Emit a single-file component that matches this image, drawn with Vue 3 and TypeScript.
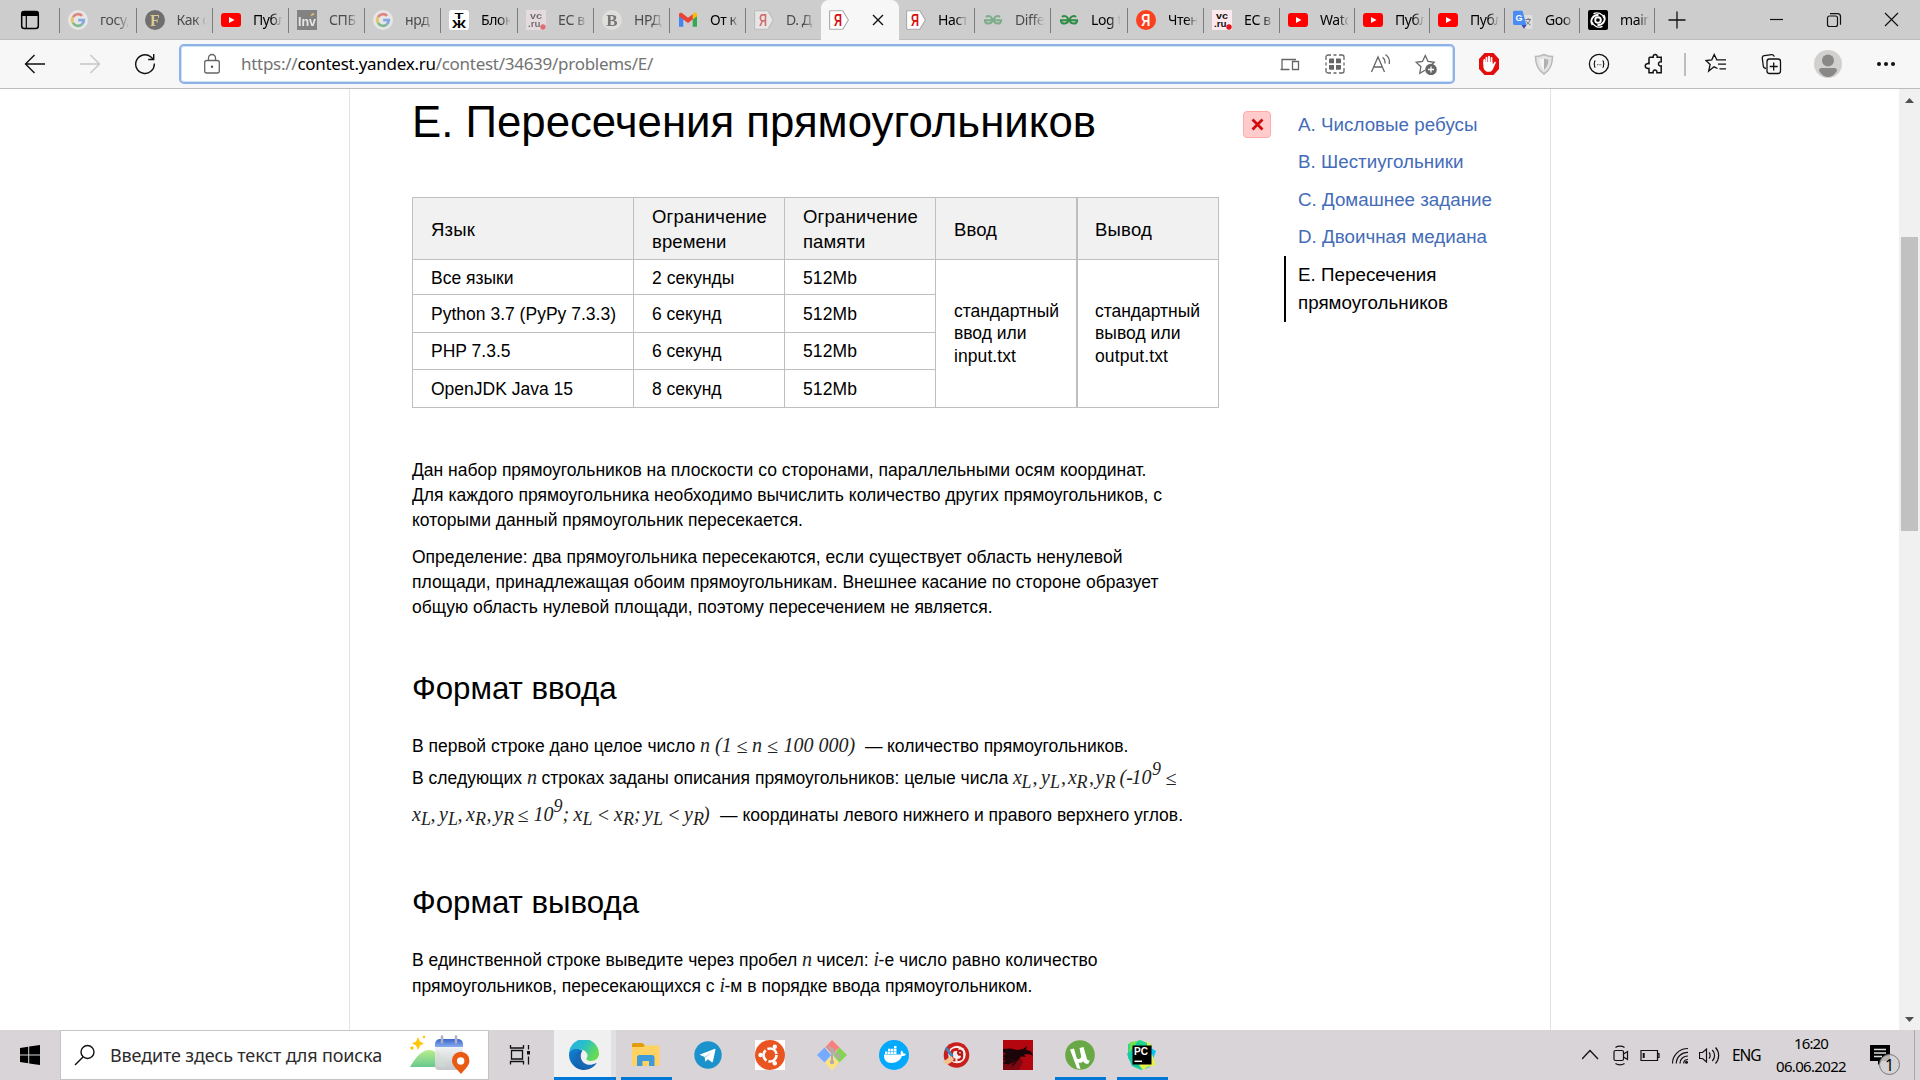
<script setup lang="ts">
import type { Directive } from 'vue'

interface Tab {
  icon: string
  title: string
  w: number
  dim?: boolean
  active?: boolean
}

interface Segment {
  t: string
  w: number
  kind: 'text' | 'math' | 'sub' | 'sup' | 'rel'
}

// Spreads the letters of an element over a given width.
const vFit: Directive<HTMLElement, number> = {
  mounted(el, { value }) {
    if (!value) return
    const range = document.createRange()
    range.selectNodeContents(el)
    const natural = range.getBoundingClientRect().width
    const count = (el.textContent ?? '').length
    el.style.letterSpacing = `${((value - natural) / count).toFixed(4)}px`
  },
}

const google =
  '<circle cx="10" cy="10" r="10" fill="#fff"/><g fill="none" stroke-width="2.7"><path d="M14.1 5.9A5.8 5.8 0 0 0 5 7.1" stroke="#ea4335"/><path d="M5 7.1A5.8 5.8 0 0 0 5 12.9" stroke="#fbbc05"/><path d="M5 12.9A5.8 5.8 0 0 0 13.8 14.4" stroke="#34a853"/><path d="M13.8 14.4A5.8 5.8 0 0 0 15.8 10.2H10.2" stroke="#4285f4"/></g>'
const youtube =
  '<rect x="0" y="3" width="20" height="14" rx="3" fill="#f00"/><path d="M8 7l5.5 3L8 13z" fill="#fff"/>'
const vc =
  '<rect width="20" height="20" fill="#fde8ee"/><g font-family="Liberation Sans" font-weight="700" font-size="9.5" fill="#111"><text x="4" y="8.500" textLength="12" lengthAdjust="spacingAndGlyphs">vc</text><text x="2" y="17" textLength="12.5" lengthAdjust="spacingAndGlyphs">.ru</text></g><circle cx="17" cy="17" r="2.7" fill="#e8131d"/>'
const contest =
  '<path d="M1.5.7h12.3L19.4 10l-5.6 9.3H1.5A1 1 0 0 1 .6 18V2a1 1 0 0 1 .9-1.3z" fill="#fff" stroke="#aaa" stroke-width="1.1"/><text x="9" y="15.7" text-anchor="middle" font-family="Liberation Sans" font-size="16" font-weight="700" fill="#d8100c" textLength="8" lengthAdjust="spacingAndGlyphs">Я</text>'
const gfg =
  '<g fill="none" stroke="#2f8d46" stroke-width="2"><path d="M3 7C5 5.300 9 6 9.200 10c0 4.300-7 5-7.400.3M17 7c-2-1.700-6-1-6.200 3 0 4.300 7 5 7.400.3M1 10.200h18"/></g>'

const tabIcons: Record<string, string> = {
  google,
  youtube,
  vc,
  contest,
  gfg,
  forbes:
    '<circle cx="10" cy="10" r="10" fill="#141414"/><text x="10" y="15.500" text-anchor="middle" font-family="Liberation Serif" font-weight="700" font-size="16" fill="#e6c84f">F</text>',
  inv:
    '<rect width="20" height="20" fill="#3a3a3a"/><text x="1" y="15.500" font-family="Liberation Sans" font-weight="700" font-size="12" fill="#fff" textLength="18" lengthAdjust="spacingAndGlyphs">Inv</text><path d="M14 5.500l3-2" stroke="#f7a414" stroke-width="2"/>',
  tj:
    '<rect y="0" width="20" height="20" rx="3" fill="#fff"/><g font-family="Liberation Sans" font-weight="700" fill="#000" text-anchor="middle"><text x="10" y="9" font-size="9.500" textLength="9" lengthAdjust="spacingAndGlyphs">Т</text><text x="10" y="18" font-size="11" textLength="14" lengthAdjust="spacingAndGlyphs">Ж</text></g>',
  b:
    '<circle cx="10" cy="10" r="10" fill="#f3efea"/><text x="10" y="15.800" text-anchor="middle" font-family="Liberation Serif" font-weight="700" font-size="17" fill="#222">B</text>',
  gmail:
    '<path d="M1 4.800v12h4.300V8.500z" fill="#4285f4"/><path d="M14.700 16.800H19v-12l-4.300 3.700z" fill="#34a853"/><path d="M14.700 4v5.500L19 6.200V4.500c0-2-2-2.700-3.300-1.500z" fill="#fbbc04"/><path d="M1 4.500v1.700l4.300 3.300L10 13l4.700-3.500V4.200L10 7.700 4.300 3.200C3 2.200 1 2.700 1 4.500z" fill="#ea4335"/>',
  yandex:
    '<circle cx="10" cy="10" r="10" fill="#fc3f1d"/><text x="9.700" y="15.800" text-anchor="middle" font-family="Liberation Sans" font-weight="700" font-size="16" fill="#fff" textLength="9" lengthAdjust="spacingAndGlyphs">Я</text>',
  translate:
    '<path d="M8 5h10a1.500 1.500 0 0 1 1.500 1.500v11A1.500 1.500 0 0 1 18 19h-5z" fill="#dedede"/><path d="M1.500.7h8l4 14.300h-12A1.500 1.500 0 0 1 0 13.500v-11A1.500 1.500 0 0 1 1.500.7z" fill="#4a8cf5"/><path d="M8.500 15h5L11 18.800z" fill="#3949ab"/><text x="6" y="11" text-anchor="middle" font-family="Liberation Sans" font-weight="700" font-size="9" fill="#fff">G</text><path d="M12.500 9.500h5.500M15.200 8v1.500M17 9.500c-.5 2.500-2 4-3.500 5.200M13.500 11.500c1 1.500 2.500 2.700 4 3.500" stroke="#777" fill="none"/>',
  spiral:
    '<rect width="20" height="20" rx="2" fill="#000"/><g fill="none" stroke="#fff" stroke-width="1.900"><circle cx="10" cy="10" r="2.800"/><path d="M15.500 5C18.500 10 15 15.500 9.500 15M4.500 15C1.500 10 5 4.500 10.500 5"/><path d="M14.500 16.300c-4 2-9 .2-10.500-4.300M5.500 3.700c4-2 9-.2 10.500 4.300" stroke-width="1.300"/></g>',
}

const tabs: Tab[] = [
  { icon: 'google', title: 'госу,', w: 76.5, dim: true },
  { icon: 'forbes', title: 'Как с', w: 76.5, dim: true },
  { icon: 'youtube', title: 'Публ', w: 76 },
  { icon: 'inv', title: 'СПБ', w: 76, dim: true },
  { icon: 'google', title: 'нрд', w: 76, dim: true },
  { icon: 'tj', title: 'Блок', w: 77 },
  { icon: 'vc', title: 'ЕС в', w: 76, dim: true },
  { icon: 'b', title: 'НРД', w: 76, dim: true },
  { icon: 'gmail', title: 'От к', w: 76 },
  { icon: 'contest', title: 'D. Д', w: 76, dim: true },
  { icon: 'contest', title: '', w: 78, active: true },
  { icon: 'contest', title: 'Наст', w: 75 },
  { icon: 'gfg', title: 'Diffe', w: 76, dim: true },
  { icon: 'gfg', title: 'Log t', w: 77 },
  { icon: 'yandex', title: 'Чтен', w: 76 },
  { icon: 'vc', title: 'ЕС в', w: 76 },
  { icon: 'youtube', title: 'Watc', w: 75 },
  { icon: 'youtube', title: 'Публ', w: 75 },
  { icon: 'youtube', title: 'Публ', w: 75 },
  { icon: 'translate', title: 'Goo', w: 75 },
  { icon: 'spiral', title: 'main', w: 75 },
]

const addressIcons: string[] = [
  '<path d="M3 17V6.500h14M1.500 16.500h9M13.500 8.500h6v8h-6z"/>',
  '<path d="M2 7V4a2 2 0 0 1 2-2h3M9.500 2h3M15 2h3a2 2 0 0 1 2 2v3M20 9.500v3M20 15v3a2 2 0 0 1-2 2h-3M12.500 20h-3M7 20H4a2 2 0 0 1-2-2v-3M2 12.500v-3"/><path d="M6 5.500h4v4.700H5V6.500a1 1 0 0 1 1-1zM12 5.500h4a1 1 0 0 1 1 1v3.700h-5zM5 12h5v4.700H6a1 1 0 0 1-1-1zM12 12h5v3.700a1 1 0 0 1-1 1h-4z" fill="#666" stroke="none"/>',
  '<path d="M1.500 19L8 4l6.500 15M4 14h8M12.500 4.500c2 1.200 2.700 3.300 2.500 6M15.500 1.500c3.300 2.200 4.500 5 3.800 9.500"/>',
  '<path d="M10 17.200l-5.200 3 1.100-6.400L1.200 9.300l6.300-.8L10.300 2.500l2.700 6 6.200.8-2.500 2.500"/><circle cx="16" cy="16.500" r="5.800" fill="#666" stroke="none"/><path d="M16 13.500v6M13 16.500h6" stroke="#fff"/>',
]

const extensionIcons: string[] = [
  '<path d="M6.500 0h9L21 6v10l-5.500 6h-9L1 16V6z" fill="#e40d0d" stroke="none"/><path d="M6.300 11V7M8.500 10V4.800M11 10V3.800M13.500 10V5" stroke="#fff" stroke-width="1.900" stroke-linecap="round"/><path d="M5.400 9h9l.4 2.500 1.500-2.300c.8-.8 1.800-.1 1.400.8l-2.800 6.300c-1 2-2.200 2.500-4 2.500-3.500 0-5.500-2-5.500-5.500z" fill="#fff" stroke="none"/>',
  '<path d="M11 1.500c3 1.700 5.500 2 8.500 2 0 8-2 13.500-8.500 17.500C4.500 17 2.500 11.500 2.500 3.500c3 0 5.500-.3 8.500-2z" fill="#e4e4e4" stroke="#b9b9b9" stroke-width="1.500"/><path d="M11 5.500c-1.700.8-3 1-4.500 1 .2 4.500 1.500 7.800 4.500 10.500z" fill="#f4f4f4" stroke="none"/><path d="M11 5.500c1.700.8 3 1 4.500 1-.2 4.500-1.500 7.800-4.500 10.500z" fill="#b0b0b0" stroke="none"/>',
  '<circle cx="11" cy="11" r="9.600"/><path d="M7.500 7.700c-1.300 0-.9 1.500-1 2.300 0 .6-.4 1-.9 1 .5 0 .9.400.9 1 .1.800-.3 2.300 1 2.300M14.500 7.700c1.300 0 .9 1.500 1 2.300 0 .6.400 1 .9 1-.5 0-.9.400-.9 1-.1.800.3 2.300-1 2.300" stroke-width="1.100"/><path d="M8.900 11.800h.8M10.700 11.800h.8M12.500 11.800h.8" stroke-width="1.100"/>',
  '<path d="M7 4.300h3.200c-.8-3.600 4.800-3.600 4 0h4v4.500c-3.600-.8-3.600 5 0 4.200v6.700h-4.300c.8-3.600-4.600-3.600-3.800 0H6v-4.300c-5 .9-5-5.600 0-4.700V5.300a1 1 0 0 1 1-1z" stroke-width="1.500"/>',
]

const sidebarIcons: string[] = [
  '<path d="M12.500 15.500L9 13.800l-5.300 4.300 1.400-6.600L1 7.500l5.800-.7L9.200 1.500l2.600 5.300h9.200M13 11.200h8M14.500 15.800H21"/>',
  '<path d="M6 15.500c-2-.2-2.500-1-2.700-2.500l-1-7.500C2 3.500 3 2.800 4.500 2.600l7-1c1.500-.2 2.400.4 2.800 2"/><rect x="7" y="6" width="13.500" height="14.500" rx="2.500"/><path d="M13.700 9.500v8M9.700 13.500h8"/>',
]

const problems = [
  { name: 'A. Числовые ребусы', w: 179.5, h: 37 },
  { name: 'B. Шестиугольники', w: 165.5, h: 38 },
  { name: 'C. Домашнее задание', w: 194, h: 37 },
  { name: 'D. Двоичная медиана', w: 189, h: 38 },
]

const limits = [
  { lang: 'Все языки', lw: 82.5, time: '2 секунды', tw: 82.5, h: 35 },
  { lang: 'Python 3.7 (PyPy 7.3.3)', lw: 185, time: '6 секунд', tw: 69.5, h: 38 },
  { lang: 'PHP 7.3.5', lw: 79.5, time: '6 секунд', tw: 69.5, h: 37 },
  { lang: 'OpenJDK Java 15', lw: 142, time: '8 секунд', tw: 69.5, h: 38 },
]

const statement = [
  [
    { t: 'Дан набор прямоугольников на плоскости со сторонами, параллельными осям координат.', w: 734.5 },
    { t: 'Для каждого прямоугольника необходимо вычислить количество других прямоугольников, с', w: 750 },
    { t: 'которыми данный прямоугольник пересекается.', w: 391 },
  ],
  [
    { t: 'Определение: два прямоугольника пересекаются, если существует область ненулевой', w: 710.5 },
    { t: 'площади, принадлежащая обоим прямоугольникам. Внешнее касание по стороне образует', w: 746.5 },
    { t: 'общую область нулевой площади, поэтому пересечением не является.', w: 580.5 },
  ],
]

const seg = (kind: Segment['kind'], t: string, w: number): Segment => ({ kind, t, w })

const inputRows: Segment[][] = [
  [
    seg('text', 'В первой строке дано целое число ', 288), seg('math', 'n', 15), seg('math', '(1', 21.5),
    seg('rel', '≤', 15.5), seg('math', 'n', 15), seg('rel', '≤', 16.5), seg('math', '100 000)', 81.5),
    seg('text', '—', 22), seg('text', 'количество прямоугольников.', 241.5),
  ],
  [
    seg('text', 'В следующих ', 115), seg('math', 'n', 14.5), seg('text', 'строках заданы описания прямоугольников: целые числа ', 471.5),
    seg('math', 'x', 8.5), seg('sub', 'L', 11), seg('math', ',', 8.5), seg('math', 'y', 9), seg('sub', 'L', 11), seg('math', ',', 7),
    seg('math', 'x', 8.5), seg('sub', 'R', 12.5), seg('math', ',', 6.5), seg('math', 'y', 9), seg('sub', 'R', 15),
    seg('math', '(-', 12), seg('math', '10', 20.5), seg('sup', '9', 13.5), seg('rel', '≤', 12),
  ],
  [
    seg('math', 'x', 9), seg('sub', 'L', 9.5), seg('math', ',', 8.5), seg('math', 'y', 9), seg('sub', 'L', 9.5), seg('math', ',', 8.5),
    seg('math', 'x', 9), seg('sub', 'R', 11.5), seg('math', ',', 7.5), seg('math', 'y', 9), seg('sub', 'R', 14.5), seg('rel', '≤', 16),
    seg('math', '10', 20), seg('sup', '9', 9), seg('math', ';', 11), seg('math', 'x', 9), seg('sub', 'L', 14), seg('rel', '<', 17.5),
    seg('math', 'x', 9), seg('sub', 'R', 11), seg('math', ';', 10), seg('math', 'y', 9), seg('sub', 'L', 14), seg('rel', '<', 17),
    seg('math', 'y', 9), seg('sub', 'R', 10), seg('math', ')', 17), seg('text', '—', 22.5), seg('text', 'координаты левого нижнего и правого верхнего углов.', 440.5),
  ],
]

const outputRows: Segment[][] = [
  [
    seg('text', 'В единственной строке выведите через пробел ', 390), seg('math', 'n', 14.5), seg('text', 'чисел: ', 57),
    seg('math', 'i', 5), seg('text', '-е число равно количество', 219),
  ],
  [
    seg('text', 'прямоугольников, пересекающихся с ', 307.5), seg('math', 'i', 5), seg('text', '-м в порядке ввода прямоугольником.', 308),
  ],
]

const taskbar: { name: string; svg: string; state?: string }[] = [
  {
    name: 'edge',
    state: 'current',
    svg: '<defs><linearGradient id="eg" x1="0" y1="0" x2="1" y2=".5"><stop offset="0" stop-color="#2cabe2"/><stop offset=".5" stop-color="#28c0cb"/><stop offset="1" stop-color="#66dc50"/></linearGradient><linearGradient id="eb" x1="0" y1="0" x2="1" y2="1"><stop offset="0" stop-color="#1383d3"/><stop offset="1" stop-color="#0c4b98"/></linearGradient></defs><path d="M0 15A15 15 0 0 1 30 13c.4 5-3.600 8-8.300 8-3.200 0-4.700-1.300-4.200-2.400 1.400-1.600 1.400-4 0-5.900C14 8 5 8.500 0 15z" fill="url(#eg)"/><path d="M0 15c0-6.500 9.500-7.500 13.500-4.500C10 11 8.500 16 10 20c2 6 10 7.800 17.500 3C22 31.500 11 31.500 5.500 26.500 2 23.500 0 19.500 0 15z" fill="url(#eb)"/><path d="M13.500 10.500C7 10.500 5 18 9 24c3.500 5.500 10 6 15.500 2.500l3-3.500C20 27 12.500 24 11.800 17c-.3-3 .7-5 1.700-6.500z" fill="#1768b5"/>',
  },
  {
    name: 'explorer',
    state: 'open',
    svg: '<path d="M1 4.500A1.500 1.500 0 0 1 2.500 3h9L14 5.500V10H1z" fill="#e19d07"/><path d="M1 7h11l2-1.500h13A1.500 1.500 0 0 1 28.500 7v17.500A1.500 1.500 0 0 1 27 26H2.500A1.500 1.500 0 0 1 1 24.500z" fill="#ffd262"/><path d="M6 26v-8.500A2.500 2.500 0 0 1 8.500 15h12.500a2.500 2.500 0 0 1 2.500 2.500V26h-5.500v-5h-6.500v5z" fill="#3d9bdc"/>',
  },
  {
    name: 'telegram',
    svg: '<circle cx="15" cy="15" r="13.700" fill="#1c92cc"/><path d="M6.500 14.800l14.800-5.900c.8-.3 1.300.2 1.100 1L20 21.300c-.2.900-.7 1.100-1.400.7l-3.700-2.800-1.900 1.900c-.5.5-.9.3-.9-.3l-.4-3.700z" fill="#fff"/><path d="M11.500 17l7.500-5.500-6 6.300z" fill="#b8d9ea"/>',
  },
  {
    name: 'ubuntu',
    svg: '<rect width="30" height="30" fill="#fff"/><circle cx="15" cy="15" r="15" fill="#e95420"/><circle cx="15" cy="15" r="6.500" fill="none" stroke="#fff" stroke-width="2.700" stroke-dasharray="11.600 2"/><circle cx="5.500" cy="15" r="2.200" fill="#fff"/><circle cx="19.800" cy="6.800" r="2.200" fill="#fff"/><circle cx="19.800" cy="23.200" r="2.200" fill="#fff"/>',
  },
  {
    name: 'git',
    svg: '<path d="M15 0l7.500 7.500L15 14 8.500 7z" fill="#f87f7b"/><path d="M7.500 7.500L14 15l-6.500 7.500L0 15z" fill="#75aaff"/><path d="M22.500 7.500L30 15l-7.500 7.500L16 15z" fill="#87d355"/><path d="M8 22.500L15 16l7 6.500L15 30z" fill="#ffe47b"/><path d="M11 6l4 4v13M15 11l6 5" fill="none" stroke="#b5aaa9" stroke-width="2"/><circle cx="15" cy="10" r="2.200" fill="#b5aaa9"/><circle cx="21" cy="16" r="2.200" fill="#b5aaa9"/><circle cx="15" cy="22" r="2.200" fill="#b5aaa9"/>',
  },
  {
    name: 'docker',
    svg: '<circle cx="15" cy="15" r="15" fill="#03a9fc"/><path d="M5 14.500h17c-.8-1.800-.3-3 .6-4 1.200.8 1.700 1.800 1.700 3 1.200-.2 2 0 2.700.4-.6 1.500-2 2.200-4 2.200C21 21 17 23 12.500 23 7.500 23 4.500 20 5 14.500z" fill="#fff"/><path d="M6 11.500h2.500V14H6zM9 11.500h2.500V14H9zM12 11.500h2.500V14H12zM15 11.500h2.500V14H15zM9 8.700h2.500v2.300H9zM12 8.700h2.500v2.300H12zM15 8.700h2.500v2.300H15zM15 6h2.500v2.200H15z" fill="#fff"/>',
  },
  {
    name: 'ccleaner',
    svg: '<circle cx="15.500" cy="15" r="12.800" fill="#c91f1c"/><circle cx="16" cy="14.500" r="8.800" fill="#f5efee"/><path d="M17.500 9.500h-3a4 4 0 0 0-4 4v2.500a4 4 0 0 0 4 4" fill="none" stroke="#c91f1c" stroke-width="3"/><path d="M21 14.500h-3a2 2 0 1 1 3-2v4c0 2-1.500 3.500-4.500 3.500" fill="none" stroke="#b81917" stroke-width="2.300"/><path d="M5.500 6.500l7 9-2.500 2-6-9z" fill="#3a87bd"/><path d="M2 21c3 0 5-4 8-5l3 3c-2 3-5 6-9 5z" fill="#f0c491"/>',
  },
  {
    name: 'dragon',
    svg: '<rect width="30" height="30" fill="#b3060f"/><path d="M0 12h14l6 10-4 8H0z" fill="#7d0812"/><path d="M0 9l8-.5 6 1.500 6-1 4-3-1 3.500 5 2 2 4-5-1.500-4 .5 2 2.500-5-.5-3 4-5 1-4 3-6-1 3-3-3-1 2-2-2-1 3-3-3-2z" fill="#1c0508"/><path d="M2 20l9-1-6 4 8-1-4 4" fill="none" stroke="#25070a" stroke-width="1.200"/>',
  },
  {
    name: 'utorrent',
    state: 'open',
    svg: '<circle cx="15" cy="15" r="14.800" fill="#68a845"/><path d="M5 9.500l4-1 2.500 9c.6 2.200 4.700 2 4.700-1L14.500 8l4-1 3.300 11.500c.4 1.400 1.400 2 3 2l-1.500 3.300c-2.300.3-4-.5-5-2.500-1.300 1.500-3 1.700-4.800 1.300l2 6.400-3.500-.8z" fill="#fff"/>',
  },
  {
    name: 'pycharm',
    state: 'open',
    svg: '<path d="M1 4L13 0l12 5-2 22-9 3-7-3-6-9z" fill="#21d789"/><path d="M0 14L11 1l6 10-3 17-9-2z" fill="#17c8a6"/><path d="M24 8l5 3-3 8-3-1z" fill="#07c3f2"/><path d="M20 1l5 5-5 1zM25 14l4 11-9 2-4 3-4-5z" fill="#e5f04b"/><path d="M3 2l8-1-9 12z" fill="#70e34c"/><rect x="5.500" y="5.500" width="19" height="19" fill="#000"/><text x="7" y="15" font-family="Liberation Sans" font-weight="700" font-size="10" fill="#fff" textLength="14">PC</text><path d="M7.500 21.300h7.500" stroke="#fff" stroke-width="1.500"/>',
  },
]

const trayIcons: string[] = [
  '<path d="M0 15l8-8.500 8 8.500" stroke-width="1.300"/>',
  '<rect x="3" y="6.500" width="9.500" height="10" rx="1.500"/><path d="M12.500 10l4-2.500v8l-4-2.500M4.500 3.500C7 1.700 11 1.700 13.500 3.500M4.500 19.500c2.500 1.800 6.500 1.800 9 0"/>',
  '<path d="M1 6.500h16.500v10H1zM17.500 9.500H19v4h-1.500" /><path d="M3.700 9v5" stroke-width="2"/>',
  '<path d="M2.500 19.500C2.500 11 9.500 4.500 18 4.500M6.300 19.500C6.300 13 11.500 8.300 18 8.300M10 19.500c0-4.500 3.500-7.500 8-7.500M13.700 19.500c0-2.500 1.800-4 4.300-4"/><circle cx="16.500" cy="18.300" r="1.500" fill="#111" stroke="none"/>',
  '<path d="M0.500 8.500h3L7.500 5v13l-4-3.500h-3zM10 8.500c1.500 1.500 1.500 4.500 0 6M13.300 6c3 3 3 8 0 11M16.500 3.500c4.200 4.500 4.200 11.500 0 16"/>',
]
</script>

<template>
  <div class="screen">
    <header class="tabstrip">
      <div class="tabmenu">
        <svg width="20" height="20" viewBox="0 0 20 20">
          <rect x="1.700" y="1.500" width="16.600" height="17" rx="2.500" fill="none" stroke="#000" stroke-width="1.500" />
          <path d="M1.500 3a2 2 0 0 1 2-2h13a2 2 0 0 1 2 2v3h-17z" />
          <path d="M6.300 6v12" stroke="#000" stroke-width="1.200" />
        </svg>
      </div>
      <div
        v-for="(tab, i) in tabs"
        :key="i"
        class="tab"
        :class="{ dim: tab.dim, active: tab.active, plain: tabs[i - 1]?.active }"
        :style="{ width: tab.w + 'px' }"
      >
        <svg class="favicon" width="20" height="20" viewBox="0 0 20 20" v-html="tabIcons[tab.icon]" />
        <span v-if="!tab.active" class="title">{{ tab.title }}</span>
        <svg v-else class="tabclose" width="12" height="12" viewBox="0 0 12 12"><path d="M1 1l10 10M11 1L1 11" /></svg>
      </div>
      <div class="newtab">
        <svg width="18" height="18" viewBox="0 0 18 18"><path d="M9 0.500v17M0.500 9h17" /></svg>
      </div>
      <div class="winbuttons">
        <svg width="57" height="20" viewBox="0 0 57 20"><path d="M21 9.500h13" /></svg>
        <svg width="57" height="20" viewBox="0 0 57 20">
          <rect x="21.500" y="6" width="10" height="10.500" rx="2" /><path d="M24 3.700h7.500a3 3 0 0 1 3 3v8" />
        </svg>
        <svg width="57" height="20" viewBox="0 0 57 20"><path d="M22 3l13 13M35 3l-13 13" /></svg>
      </div>
    </header>

    <div class="toolbar">
      <div class="nav">
        <svg width="22" height="22" viewBox="0 0 22 22"><path d="M21 11H1.500M10.500 2L1.500 11l9 9" /></svg>
        <svg class="off" width="22" height="22" viewBox="0 0 22 22"><path d="M1 11h19.500M11.500 2l9 9-9 9" /></svg>
        <svg width="22" height="22" viewBox="0 0 22 22"><path d="M20.300 10.500A9.300 9.300 0 1 1 17 4l2.300 2.200M19.700 1v5.500h-5.500" /></svg>
      </div>
      <div class="address">
        <svg class="lock" width="18" height="22" viewBox="0 0 18 22">
          <rect x="1.700" y="7.500" width="14.600" height="12.500" rx="2" /><path d="M5.500 7.500V5a3.500 3.500 0 0 1 7 0v2.500" />
          <circle cx="9" cy="13.700" r="1.200" fill="#555" stroke="none" />
        </svg>
        <span v-fit="412" class="url">https://<b>contest.yandex.ru</b>/contest/34639/problems/E/</span>
        <div class="addressicons">
          <svg v-for="(svg, i) in addressIcons" :key="i" width="22" height="22" viewBox="0 0 22 22" v-html="svg" />
        </div>
      </div>
      <div class="extensions">
        <svg v-for="(svg, i) in extensionIcons" :key="i" width="22" height="22" viewBox="0 0 22 22" v-html="svg" />
      </div>
      <div class="divider" />
      <div class="extensions">
        <svg v-for="(svg, i) in sidebarIcons" :key="i" width="22" height="22" viewBox="0 0 22 22" v-html="svg" />
      </div>
      <div class="profile">
        <svg width="28" height="28" viewBox="0 0 28 28">
          <circle cx="14" cy="14" r="14" fill="#d2d0ce" /><circle cx="14" cy="10.500" r="6" fill="#8a8886" />
          <path d="M5 20.500c0-1.500 1-2.500 2.500-2.500h13c1.500 0 2.500 1 2.500 2.500-2 4-5 6.500-9 6.500s-7-2.500-9-6.500z" fill="#8a8886" />
        </svg>
      </div>
      <div class="more"><i /><i /><i /></div>
    </div>

    <div class="viewport">
      <main class="page">
        <article class="problem">
          <h1><span v-fit="684">E. Пересечения прямоугольников</span></h1>

          <div class="limits">
            <div class="table-head">
              <div class="cell c1"><span v-fit="44">Язык</span></div>
              <div class="cell c2"><span v-fit="115">Ограничение</span><span v-fit="74.500">времени</span></div>
              <div class="cell c2"><span v-fit="115">Ограничение</span><span v-fit="62.500">памяти</span></div>
              <div class="cell c3"><span v-fit="43">Ввод</span></div>
              <div class="cell c4"><span v-fit="57">Вывод</span></div>
            </div>
            <div class="table-body">
              <div class="rows">
                <div v-for="row in limits" :key="row.lang" class="table-row" :style="{ height: row.h + 'px' }">
                  <div class="cell c1"><span v-fit="row.lw">{{ row.lang }}</span></div>
                  <div class="cell c2"><span v-fit="row.tw">{{ row.time }}</span></div>
                  <div class="cell c2"><span v-fit="54">512Mb</span></div>
                </div>
              </div>
              <div class="cell c3 files"><span v-fit="105">стандартный</span><span v-fit="72.500">ввод или</span><span v-fit="62">input.txt</span></div>
              <div class="cell c4 files"><span v-fit="105">стандартный</span><span v-fit="85.500">вывод или</span><span v-fit="73">output.txt</span></div>
            </div>
          </div>

          <p v-for="(para, i) in statement" :key="i" class="para">
            <span v-for="line in para" :key="line.t" class="line"><span v-fit="line.w">{{ line.t }}</span></span>
          </p>

          <h2 class="h-in"><span v-fit="204.500">Формат ввода</span></h2>
          <div class="input">
            <div v-for="(row, i) in inputRows" :key="i" class="frow">
              <span v-for="(s, j) in row" :key="j" :class="s.kind" :style="{ width: s.w + 'px' }"><span v-fit="s.kind === 'text' && s.t.length > 1 ? s.w : 0">{{ s.t }}</span></span>
            </div>
          </div>

          <h2 class="h-out"><span v-fit="227">Формат вывода</span></h2>
          <div class="output">
            <div v-for="(row, i) in outputRows" :key="i" class="frow">
              <span v-for="(s, j) in row" :key="j" :class="s.kind" :style="{ width: s.w + 'px' }"><span v-fit="s.kind === 'text' ? s.w : 0">{{ s.t }}</span></span>
            </div>
          </div>
        </article>

        <aside class="problems">
          <div class="status">
            <svg width="13" height="13" viewBox="0 0 13 13"><path d="M1.500 1.500l10 10M11.500 1.500l-10 10" stroke="#d00b0b" stroke-width="2.800" /></svg>
          </div>
          <nav>
            <a v-for="p in problems" :key="p.name" :style="{ height: p.h + 'px' }"><span v-fit="p.w">{{ p.name }}</span></a>
            <a class="selected"><span v-fit="138.500">E. Пересечения</span><span v-fit="150">прямоугольников</span></a>
          </nav>
        </aside>
      </main>
      <div class="scrollbar">
        <svg width="21" height="21" viewBox="0 0 21 21"><path d="M6 14l4.500-5 4.500 5z" fill="#505050" /></svg>
        <div class="thumb" />
        <svg width="21" height="21" viewBox="0 0 21 21"><path d="M6 8h9l-4.500 5z" fill="#505050" /></svg>
      </div>
    </div>

    <footer class="taskbar">
      <div class="start">
        <svg width="20" height="20" viewBox="0 0 20 20"><path d="M0 3l8.200-1.200V9.500H0zM9.200 1.600L20 0v9.500H9.200zM0 10.500h8.200v7.700L0 17zM9.200 10.500H20V20L9.200 18.400z" /></svg>
      </div>
      <div class="search">
        <svg class="glass" width="22" height="22" viewBox="0 0 22 22"><circle cx="13.500" cy="8" r="6.500" /><path d="M9 13L1 21" /></svg>
        <span v-fit="272">Введите здесь текст для поиска</span>
        <svg class="art" width="62" height="40" viewBox="0 0 62 40">
          <defs>
            <linearGradient id="hill" x1="0" y1="0" x2="0" y2="1"><stop offset="0" stop-color="#b9ec8d" /><stop offset="1" stop-color="#67c98f" /></linearGradient>
            <linearGradient id="cal" x1="0" y1="0" x2="0" y2="1"><stop offset="0" stop-color="#3d63cf" /><stop offset="1" stop-color="#87aeef" /></linearGradient>
            <linearGradient id="pad" x1="0" y1="0" x2="0" y2="1"><stop offset="0" stop-color="#fff" /><stop offset="1" stop-color="#c4c6ca" /></linearGradient>
          </defs>
          <path d="M1 32C8 20 14 15 20 15s10 3 15 17z" fill="url(#hill)" />
          <rect x="26" y="5" width="28" height="30" rx="4" fill="url(#pad)" />
          <path d="M28 16c5 4 8 10 9 16h-9z" fill="#c9dfcd" opacity=".5" />
          <path d="M26 12V9a5 5 0 0 1 5-5h18a5 5 0 0 1 5 5v3z" fill="url(#cal)" />
          <path d="M33 1.500v6M47 1.500v6" stroke="#aab1bf" stroke-width="2.500" stroke-linecap="round" />
          <path d="M9 2l2 4.500 4 2-4 2L9 15l-2-4.500-4-2 4-2z" fill="#ffc60b" /><circle cx="15" cy="2" r="1.300" fill="#ffc60b" /><circle cx="3" cy="13" r="1.700" fill="#ffc60b" />
          <path d="M52 39c-4-5-9-8-9-13.500a8.700 8.700 0 0 1 17.400 0C60.400 31 56 34 52 39z" fill="#ea5a13" /><circle cx="51.700" cy="26" r="3.700" fill="#fff" />
        </svg>
      </div>
      <div class="taskview">
        <svg width="22" height="22" viewBox="0 0 22 22"><path d="M1.500 1v3h13V1M1.500 20.500v-3h13v3M2.500 6.500h11v8.500h-11zM19.500 1v4.500M19.500 12.500v8" /><path d="M18 7h3v3.500h-3z" fill="#111" stroke="none" /></svg>
      </div>
      <div v-for="app in taskbar" :key="app.name" class="app" :class="app.state">
        <svg width="30" height="30" viewBox="0 0 30 30" v-html="app.svg" />
      </div>
      <div class="tray">
        <svg v-for="(svg, i) in trayIcons" :key="i" width="22" height="22" viewBox="0 0 22 22" v-html="svg" />
      </div>
      <span class="lang"><span v-fit="28.500">ENG</span></span>
      <div class="clock"><span v-fit="34">16:20</span><span v-fit="70">06.06.2022</span></div>
      <div class="notify">
        <svg width="32" height="32" viewBox="0 0 32 32">
          <path d="M1 1h20v16H13l-4 4v-4H1z" fill="#000" /><path d="M5 5.500h12M5 9h12M5 12.500h8" stroke="#ddd" stroke-width="1.300" />
          <circle cx="20.500" cy="20.500" r="10" fill="#d5d1d4" fill-opacity=".85" stroke="#777" />
          <text x="20.500" y="26.500" text-anchor="middle" font-family="Noto Sans" font-size="16" fill="#000">1</text>
        </svg>
      </div>
      <div class="peek" />
    </footer>
  </div>
</template>

<style>
body {
  margin: 0;
  overflow: hidden;
}
</style>

<style scoped>
.screen {
  width: 1920px;
  height: 1080px;
  display: flex;
  flex-direction: column;
  overflow: hidden;
  background: #fff;
  color: #000;
  font-family: "Liberation Sans", Arial, sans-serif;
}
.screen * {
  box-sizing: border-box;
}
svg {
  display: block;
  flex: none;
}

/* tab strip */
.tabstrip {
  height: 40px;
  flex: none;
  display: flex;
  background: #cdcdcd;
  box-shadow: inset 0 -1px #bdbdbd;
  font-family: "Noto Sans", sans-serif;
}
.tabmenu {
  width: 59px;
  padding: 10px 0 0 20px;
}
.tab {
  flex: none;
  display: flex;
  align-items: center;
  gap: 12px;
  padding-left: 9px;
  height: 40px;
  background: linear-gradient(#7c7c7c, #7c7c7c) 0 8px / 1px 25px no-repeat;
}
.tab.active {
  background: #f7f7f7;
  border-radius: 8px 8px 0 0;
  padding-left: 8px;
  gap: 23px;
}
.tab.plain {
  background: none;
  padding-left: 7px;
}
.title {
  width: 30px;
  flex: none;
  white-space: nowrap;
  font-size: 14px;
  letter-spacing: -0.4px;
  line-height: 24px;
  -webkit-mask-image: linear-gradient(90deg, #000 60%, transparent 98%);
  mask-image: linear-gradient(90deg, #000 60%, transparent 98%);
}
.dim .favicon {
  opacity: 0.5;
}
.dim .title {
  color: #4c4c4c;
}
.tabclose {
  fill: none;
  stroke: #111;
  stroke-width: 1.4;
}
.newtab {
  width: 32px;
  padding: 11px 0 0 14px;
  background: linear-gradient(#7c7c7c, #7c7c7c) 0 8px / 1px 25px no-repeat;
  fill: none;
  stroke: #111;
  stroke-width: 1.3;
}
.winbuttons {
  margin-left: auto;
  display: flex;
  padding-top: 10px;
  fill: none;
  stroke: #111;
  stroke-width: 1.2;
}

/* toolbar */
.toolbar {
  height: 49px;
  flex: none;
  display: flex;
  align-items: center;
  background: #f7f7f7;
  border-bottom: 1px solid #bcbcbc;
}
.nav {
  width: 179px;
  display: flex;
  gap: 33px;
  padding-left: 24px;
  fill: none;
  stroke: #111;
  stroke-width: 1.4;
}
.nav .off {
  stroke: #c6c6c6;
}
.address {
  width: 1276px;
  height: 40px;
  display: flex;
  align-items: center;
  background: #fff;
  border: 2px solid #8db2e8;
  border-radius: 5px;
  box-shadow: inset 0 0 0 1px #cfdff6;
  padding-left: 22px;
}
.lock {
  fill: none;
  stroke: #666;
  stroke-width: 1.3;
}
.url {
  margin: -2px 0 0 20px;
  font: 17px "Noto Sans", sans-serif;
  color: #737373;
  white-space: nowrap;
}
.url b {
  font-weight: 400;
  color: #000;
}
.addressicons {
  margin-left: auto;
  margin-right: 16px;
  display: flex;
  gap: 23.5px;
  fill: none;
  stroke: #666;
  stroke-width: 1.3;
}
.extensions {
  display: flex;
  gap: 33px;
  fill: none;
  stroke: #111;
  stroke-width: 1.3;
}
.address + .extensions {
  padding: 0 19px 0 23px;
}
.divider {
  flex: none;
  width: 2px;
  height: 23px;
  background: #bdbdbd;
}
.divider + .extensions {
  padding: 0 32px 0 19px;
}
.more {
  margin-left: 35px;
  display: flex;
  gap: 3px;
}
.more i {
  width: 4px;
  height: 4px;
  border-radius: 50%;
  background: #111;
}

/* page */
.viewport {
  height: 941px;
  flex: none;
  display: flex;
  justify-content: space-between;
  overflow: hidden;
}
.page {
  width: 1202px;
  margin-left: 349px;
  border-left: 1px solid #e3e3e3;
  border-right: 1px solid #e3e3e3;
  display: flex;
}
.problem {
  width: 807px;
  margin-left: 62px;
  flex: none;
  font-size: 17.5px;
  line-height: 25px;
  white-space: nowrap;
}
h1,
h2 {
  font-weight: 400;
}
h1 {
  margin: 8px 0 50px;
  font-size: 43.75px;
  line-height: 50px;
}
h2 {
  font-size: 31.25px;
  line-height: 40px;
}
.h-in {
  margin: 49px 0 25px;
}
.h-out {
  margin: 55px 0 25px;
}
.limits {
  border: 1px solid #bfbfbf;
  width: 807px;
}
.table-head,
.table-body,
.table-row {
  display: flex;
}
.table-head {
  height: 62px;
  background: #f1f1f1;
  border-bottom: 1px solid #bfbfbf;
  font-size: 18.5px;
}
.table-head .cell {
  padding-top: 1px;
}
.table-body {
  height: 147px;
}
.table-row {
  border-bottom: 1px solid #bfbfbf;
}
.table-row:nth-child(2) .cell {
  padding-top: 1px;
}
.table-row:first-child .cell {
  padding-top: 2px;
}
.table-row:last-child {
  border-bottom: 0;
}
.cell {
  display: flex;
  flex-direction: column;
  justify-content: center;
  align-items: flex-start;
  padding-left: 18px;
  border-right: 1px solid #bfbfbf;
}
.c1 {
  width: 221px;
}
.c2 {
  width: 151px;
}
.c3 {
  width: 142px;
  border-right-width: 2px;
}
.c4 {
  width: 140px;
  padding-left: 17px;
  border-right: 0;
}
.files {
  line-height: 22.5px;
}
.para {
  margin: 50px 0 12px;
}
.para + .para {
  margin: 0;
}
.line {
  display: block;
}
.frow {
  display: flex;
  height: 25px;
  white-space: pre;
}
.input .frow:nth-child(2) {
  margin: 7px 0 12px;
}
.output .frow + .frow {
  margin-top: 1px;
}
.frow > span {
  flex: none;
}
.math,
.sub,
.sup,
.rel {
  font-family: "Liberation Serif", "Times New Roman", serif;
  font-style: italic;
  font-size: 20px;
  margin-top: -1px;
  color: #222;
}
.sub,
.sup {
  font-size: 18px;
}
.sub {
  padding-top: 5px;
}
.sup {
  margin-top: -9px;
}
.rel {
  padding-top: 1px;
}

/* problem list */
.problems {
  display: flex;
  padding-top: 22px;
}
.status {
  width: 28px;
  height: 27px;
  margin-left: 24px;
  display: flex;
  align-items: center;
  justify-content: center;
  background: #ffcbcb;
  border: 1px solid #ffa9a9;
  border-radius: 4px;
}
nav {
  margin: -6px 0 0 13px;
  font-size: 18.75px;
  line-height: 28px;
  color: #446cb8;
  white-space: nowrap;
}
nav a {
  display: flex;
  flex-direction: column;
  align-items: flex-start;
  padding: 6px 0 0 14px;
}
nav .selected {
  height: 66px;
  margin-top: 1px;
  padding: 5px 0 0 12px;
  border-left: 2px solid #000;
  color: #000;
}

.scrollbar {
  width: 21px;
  display: flex;
  flex-direction: column;
  background: #f0f0f0;
}
.thumb {
  width: 17px;
  height: 294px;
  margin: 127px 2px auto;
  background: #c1c1c1;
}

/* taskbar */
.taskbar {
  height: 50px;
  flex: none;
  display: flex;
  align-items: center;
  background: #d8d4d7;
  font-family: "Noto Sans", sans-serif;
}
.start {
  width: 60px;
  padding-left: 20px;
}
.search {
  width: 429px;
  height: 50px;
  display: flex;
  align-items: center;
  background: #fff;
  border: 1px solid #c4c4c4;
  font-size: 18px;
  color: #2b2b2b;
  white-space: nowrap;
}
.glass {
  margin: 0 14px 0 13px;
  fill: none;
  stroke: #111;
  stroke-width: 1.4;
}
.art {
  margin-left: auto;
  margin-right: 17px;
}
.taskview {
  width: 65px;
  padding-left: 20px;
  fill: none;
  stroke: #111;
  stroke-width: 1.3;
}
.app {
  width: 62px;
  height: 50px;
  flex: none;
  padding: 10px 0 0 15px;
}
.app.current {
  border-bottom: 3px solid #0078d7;
  background: linear-gradient(90deg, #f1f0f1 57px, #e3e0e2 57px);
}
.app.open {
  background: linear-gradient(#0078d7, #0078d7) 5px 47px / 51px 3px no-repeat;
}
.tray {
  margin-left: auto;
  display: flex;
  gap: 7.3px;
  fill: none;
  stroke: #111;
  stroke-width: 1.2;
}
.lang {
  margin-left: 11px;
  width: 44px;
  font-size: 15.5px;
}
.clock {
  width: 70px;
  display: flex;
  flex-direction: column;
  align-items: center;
  font-size: 15px;
  line-height: 23px;
  white-space: nowrap;
}
.notify {
  margin-left: 23px;
  padding-top: 10px;
}
.peek {
  width: 6px;
  height: 50px;
  margin-left: 13px;
  border-left: 1px solid #aaa7a9;
}
</style>
